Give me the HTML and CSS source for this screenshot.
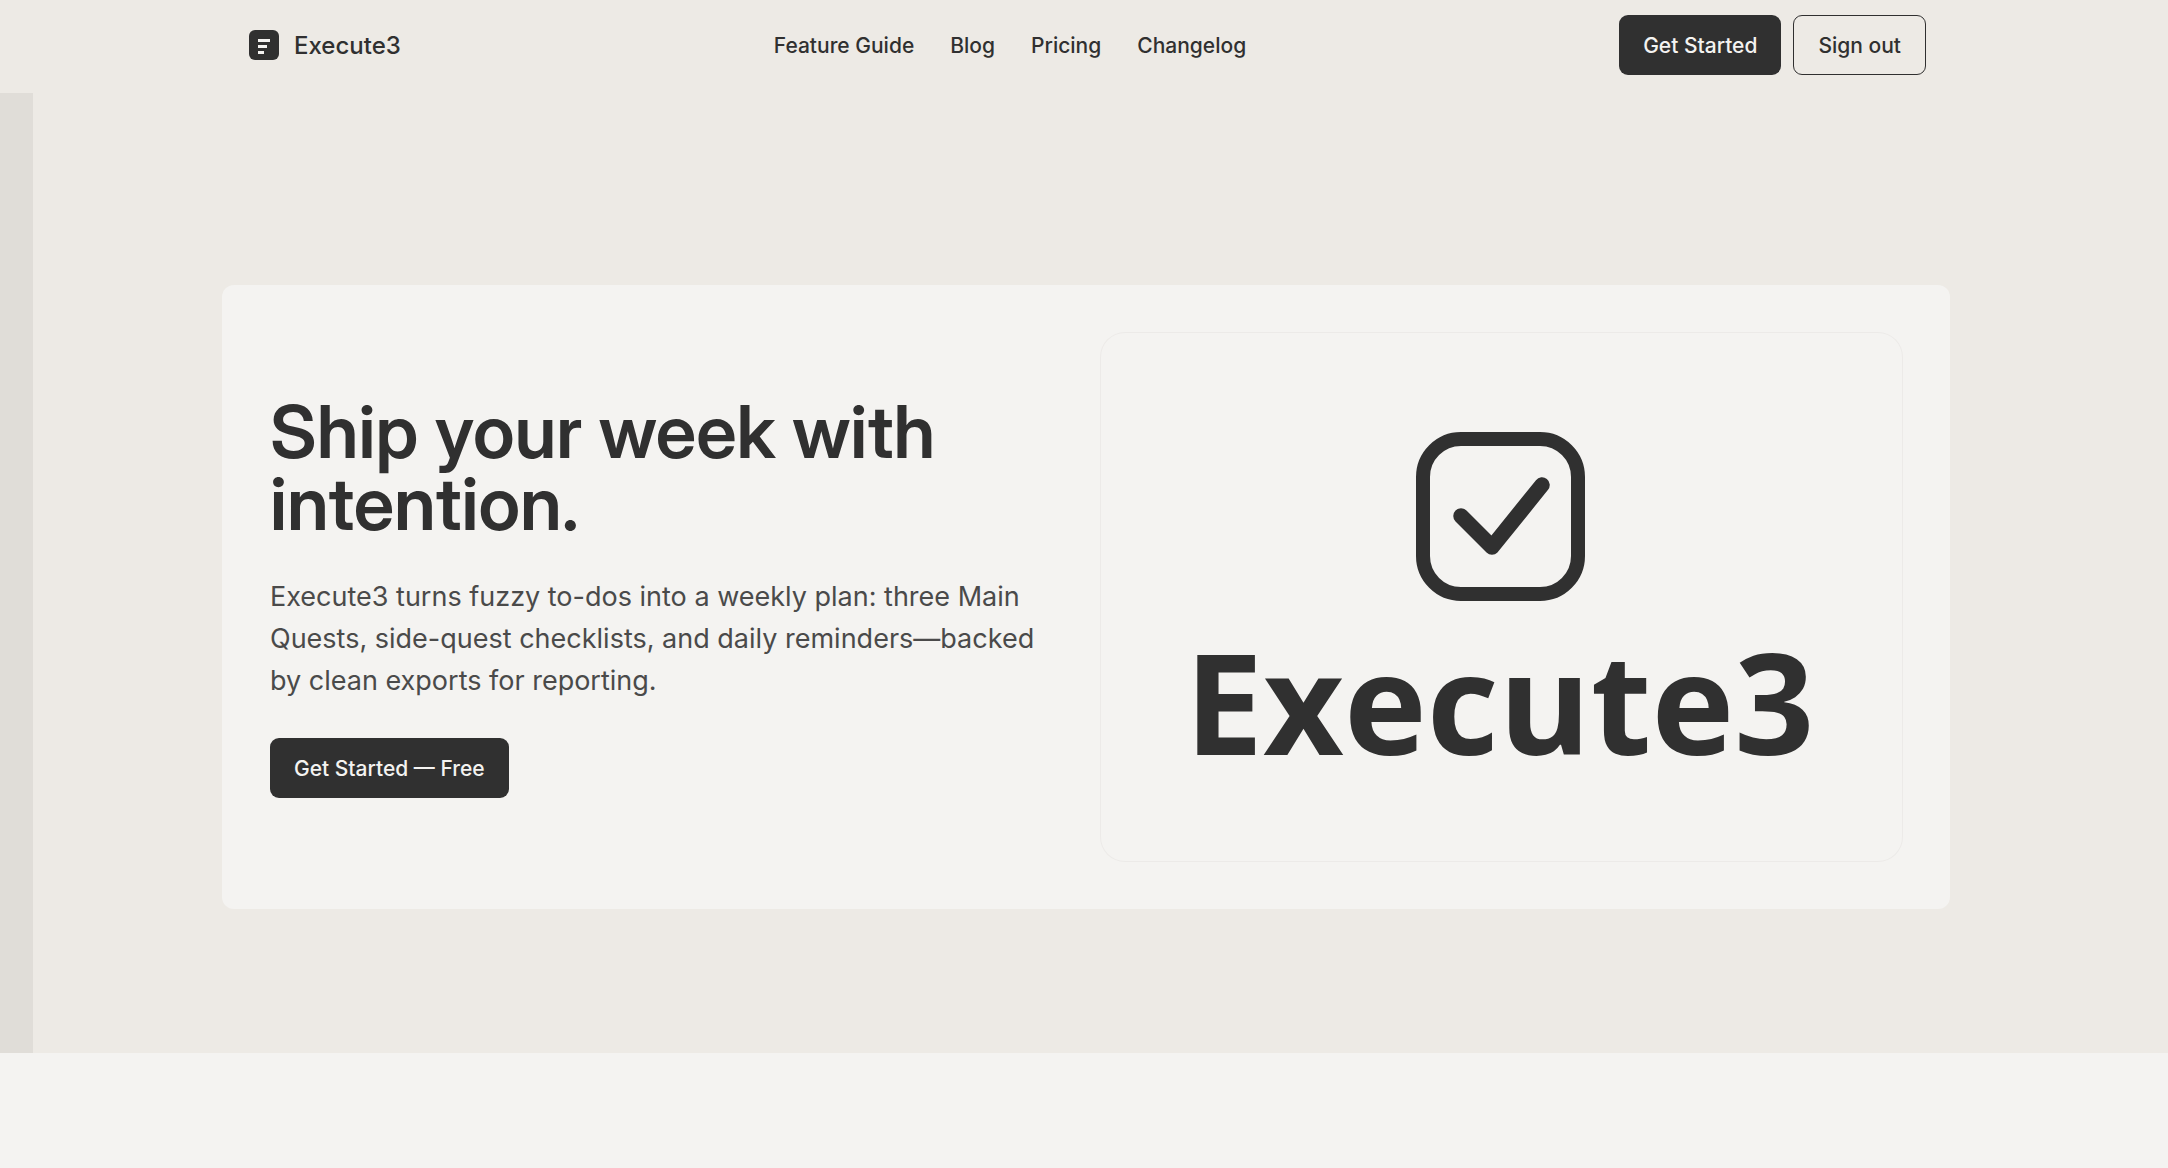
FILE: index.html
```html
<!DOCTYPE html>
<html lang="en">
<head>
    <meta charset="UTF-8">
    <meta name="viewport" content="width=device-width, initial-scale=1.0">
    <title>Execute3</title>
    <link rel="stylesheet" href="styles.css">
</head>
<body>
    <header class="header">
        <div class="container nav">
            <a class="brand" href="#">
                <svg class="brand-icon" viewBox="0 0 24 24" aria-hidden="true">
                    <rect x="2" y="2" width="20" height="20" rx="4" fill="#303030"/>
                    <path d="M8 8h8v2H8zM8 12h6v2H8zM8 16h4v2H8z" fill="#f4f3f1"/>
                </svg>
                <span>Execute3</span>
            </a>
            <nav class="links">
                <a href="#">Feature Guide</a>
                <a href="#">Blog</a>
                <a href="#">Pricing</a>
                <a href="#">Changelog</a>
            </nav>
            <div class="actions">
                <button type="button" class="btn btn-dark">Get Started</button>
                <button type="button" class="btn btn-outline">Sign out</button>
            </div>
        </div>
    </header>
    <main>
        <section class="hero">
            <div class="container card">
                <div class="copy">
                    <h1>Ship your week with intention.</h1>
                    <p>Execute3 turns fuzzy to-dos into a weekly plan: three Main Quests, side-quest checklists, and daily reminders—backed by clean exports for reporting.</p>
                    <button type="button" class="btn btn-dark">Get Started — Free</button>
                </div>
                <div class="artwork">
                    <svg class="check" viewBox="0 0 170 170" aria-hidden="true">
                        <rect x="8" y="8" width="155" height="155" rx="38" fill="none" stroke="#303030" stroke-width="14"/>
                        <path d="M46 85l31 31 50-62" fill="none" stroke="#303030" stroke-width="15.5" stroke-linecap="round" stroke-linejoin="round"/>
                    </svg>
                    <span class="wordmark">Execute3</span>
                </div>
            </div>
        </section>
    </main>
</body>
</html>
```

FILE: styles.css
```css
* {
    box-sizing: border-box;
}

body {
    margin: 0;
    font-family: Inter, "Liberation Sans", sans-serif;
    color: #303030;
    background-color: #f4f3f1;
}

a {
    color: inherit;
    text-decoration: none;
}

.container {
    width: 100%;
    max-width: 1728px;
    margin: 0 auto;
}

.header {
    padding: 15px 0 18px 4px;
    background-color: #edeae5;
}

.nav {
    display: flex;
    justify-content: space-between;
    align-items: center;
    padding: 0 24px;
}

.brand,
.actions {
    display: flex;
    align-items: center;
    gap: 12px;
}

.brand {
    font-size: 24px;
    font-weight: 500;
}

.brand-icon {
    width: 36px;
    height: 36px;
}

.links {
    display: flex;
    gap: 36px;
    font-size: 21px;
    font-weight: 500;
}

.btn {
    height: 60px;
    padding: 0 24px;
    border: none;
    border-radius: 9px;
    font-family: inherit;
    font-size: 21px;
    font-weight: 500;
    cursor: pointer;
}

.btn-dark {
    color: #f4f3f1;
    background-color: #303030;
}

.btn-outline {
    border: 1px solid #303030;
    color: #303030;
    background-color: transparent;
}

.hero {
    padding: 192px 0 144px 4px;
    background: linear-gradient(#e0ddd8, #e0ddd8) left / 33px 100% no-repeat #edeae5;
}

.card {
    display: grid;
    grid-template-columns: 1fr 1fr;
    align-items: center;
    gap: 30px;
    padding: 48px;
    border-radius: 12px;
    background-color: #f4f3f1;
}

h1 {
    margin: 0;
    font-family: "Inter Display", Inter, sans-serif;
    font-size: 73px;
    font-weight: 600;
    line-height: 72px;
}

.copy p {
    margin: 36px 0;
    font-size: 27px;
    line-height: 42px;
    color: #4a4a4a;
}

.artwork {
    display: flex;
    flex-direction: column;
    align-items: center;
    justify-content: center;
    min-height: 528px;
    padding: 38px 4px 0 0;
    border-radius: 24px;
    box-shadow: 0 0 0 1px #eceae8;
}

.check {
    width: 170px;
    height: 170px;
}

.wordmark {
    font-family: "Open Sans", "Noto Sans", sans-serif;
    font-size: 140px;
    font-weight: 700;
    line-height: 200px;
}
```
